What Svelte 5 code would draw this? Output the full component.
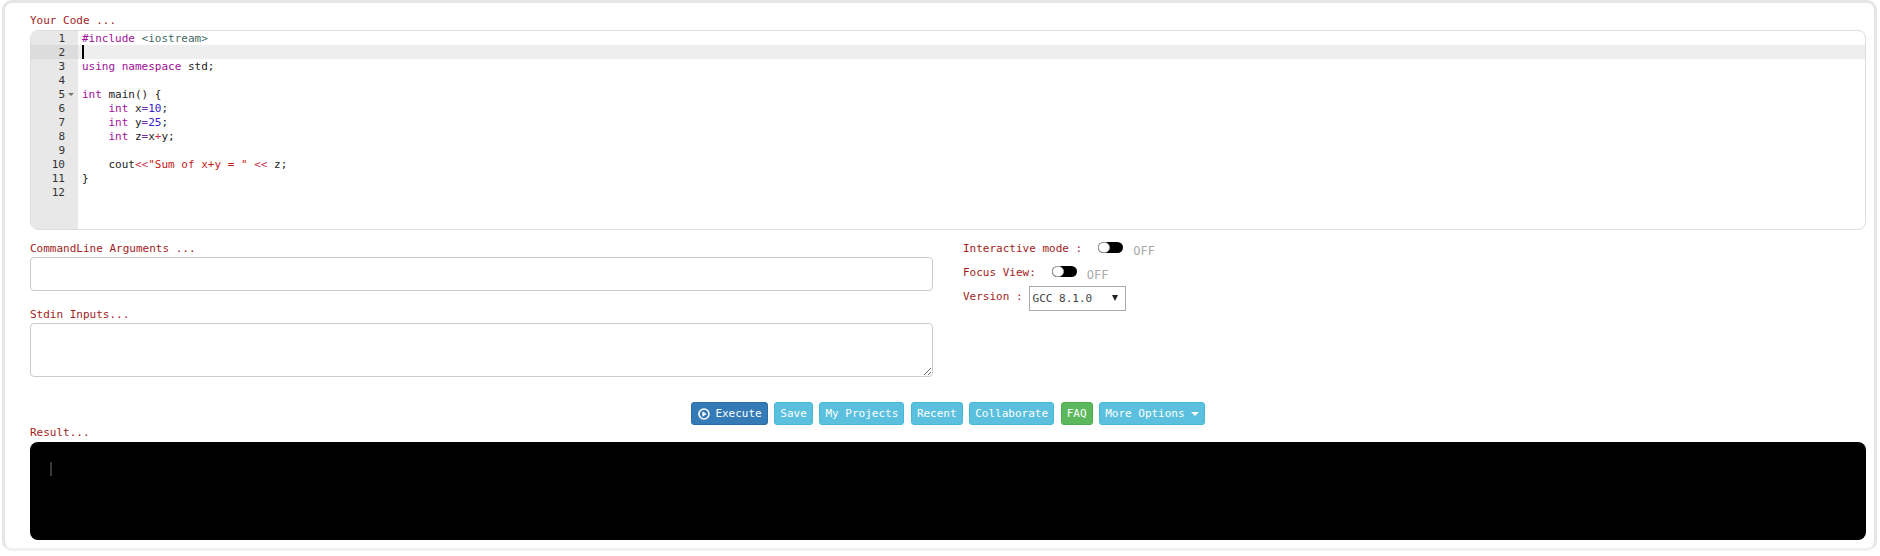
<script>
  const buttons = [
    { label: 'Save', kind: 'info' },
    { label: 'My Projects', kind: 'info' },
    { label: 'Recent', kind: 'info' },
    { label: 'Collaborate', kind: 'info' },
    { label: 'FAQ', kind: 'success' }
  ]

  const lineNumbers = Array.from({ length: 12 }, (_, i) => i + 1)
</script>

<div class="card">
  <div class="label">Your Code ...</div>
  <div class="editor">
    <div class="gutter">
      {#each lineNumbers as n}
        <div class="num" class:active={n === 2}>
          {n}{#if n === 5}<span class="fold"></span>{/if}
        </div>
      {/each}
    </div>
    <div class="lines">
      <div class="line"><span class="kw">#include</span> <span class="inc">&lt;iostream&gt;</span></div>
      <div class="line active"><span class="cursor"></span></div>
      <div class="line"><span class="kw">using</span> <span class="kw">namespace</span> std;</div>
      <div class="line"></div>
      <div class="line"><span class="kw">int</span> main() {'{'}</div>
      <div class="line indent"><span class="kw">int</span> x<span class="eq">=</span><span class="nb">10</span>;</div>
      <div class="line indent"><span class="kw">int</span> y<span class="eq">=</span><span class="nb">25</span>;</div>
      <div class="line indent"><span class="kw">int</span> z<span class="eq">=</span>x<span class="op">+</span>y;</div>
      <div class="line"></div>
      <div class="line indent">cout<span class="op">&lt;&lt;</span><span class="str">"Sum of x+y = "</span> <span class="op">&lt;&lt;</span> z;</div>
      <div class="line">{'}'}</div>
      <div class="line"></div>
    </div>
  </div>

  <div class="form-row">
    <div class="inputs">
      <div class="label">CommandLine Arguments ...</div>
      <input class="field" type="text" />
      <div class="label stdin-label">Stdin Inputs...</div>
      <textarea class="field area"></textarea>
    </div>
    <div class="options">
      <div class="opt">
        <span class="label">Interactive mode :</span>
        <span class="toggle"></span>
        <span class="off">OFF</span>
      </div>
      <div class="opt">
        <span class="label">Focus View:</span>
        <span class="toggle"></span>
        <span class="off">OFF</span>
      </div>
      <div class="opt version">
        <span class="label">Version :</span>
        <span class="select">GCC 8.1.0<span class="arrow"></span></span>
      </div>
    </div>
  </div>

  <div class="actions">
    <button class="btn primary">
      <svg viewBox="0 0 12 12" width="12" height="12" aria-hidden="true">
        <circle cx="6" cy="6" r="5" fill="none" stroke="currentColor" stroke-width="1.6" />
        <path d="M4.4 3.3 8.6 6 4.4 8.7z" fill="currentColor" />
      </svg>
      Execute
    </button>
    {#each buttons as b}
      <button class="btn {b.kind}">{b.label}</button>
    {/each}
    <button class="btn info">More Options <span class="caret"></span></button>
  </div>

  <div class="label result-label">Result...</div>
  <div class="terminal"><span class="term-cursor"></span></div>
</div>

<style>
  :global(body) {
    background: #fff;
  }

  .card {
    box-sizing: border-box;
    width: 1875px;
    height: 551px;
    margin-left: 2px;
    padding: 11px 8px 0 25px;
    border: 3px solid #e6e6e6;
    border-bottom-color: #f1f1f1;
    border-radius: 10px;
    font-family: 'DejaVu Sans Mono', monospace;
    font-size: 11px;
    color: #222;
  }

  .label {
    color: #a11d1d;
    line-height: 14px;
  }

  .editor {
    display: flex;
    box-sizing: border-box;
    height: 200px;
    margin-top: 2px;
    border: 1px solid #ddd;
    border-radius: 8px;
    overflow: hidden;
    line-height: 16px;
  }

  .gutter {
    width: 47px;
    background: #e8e8e8;
    color: #333;
    flex: none;
  }

  .num {
    position: relative;
    box-sizing: border-box;
    height: 14px;
    padding-right: 13px;
    text-align: right;
  }

  .num.active {
    background: #dcdcdc;
  }

  .fold {
    position: absolute;
    right: 4px;
    top: 6px;
    border: 3px solid transparent;
    border-top: 3px solid #777;
    border-bottom: 0;
  }

  .lines {
    flex: 1;
  }

  .line {
    height: 14px;
    padding-left: 4px;
    white-space: pre;
  }

  .line.indent {
    padding-left: calc(4px + 4ch);
  }

  .line.active {
    background: #eeeeee;
  }

  .cursor {
    display: block;
    width: 2px;
    height: 14px;
    background: #000;
  }

  .kw {
    color: #a0109a;
  }

  .inc {
    color: #3f6b66;
  }

  .eq {
    color: #7a2fa8;
  }

  .nb {
    color: #3322cc;
  }

  .op {
    color: #c4324c;
  }

  .str {
    color: #c41a16;
  }

  .form-row {
    display: flex;
    margin-top: 12px;
  }

  .inputs {
    width: 903px;
    flex: none;
  }

  .field {
    display: block;
    box-sizing: border-box;
    width: 100%;
    height: 34px;
    margin: 1px 0 0;
    padding: 4px 8px;
    border: 1px solid #ccc;
    border-radius: 4px;
    background: #fff;
  }

  .area {
    height: 54px;
    resize: vertical;
  }

  .stdin-label {
    margin-top: 17px;
  }

  .options {
    margin-left: 30px;
  }

  .opt {
    display: flex;
    align-items: center;
    height: 14px;
    margin-bottom: 10px;
  }

  .toggle {
    position: relative;
    display: inline-block;
    width: 25px;
    height: 11px;
    margin: -4px 0 0 16px;
    border-radius: 6px;
    background: #000;
  }

  .toggle::before {
    content: '';
    position: absolute;
    left: 0;
    top: 0;
    width: 12px;
    height: 11px;
    box-sizing: border-box;
    border: 1px solid #aaa;
    border-radius: 6px;
    background: #fff;
  }

  .off {
    margin: 3px 0 0 10px;
    color: #aaa;
    font-size: 12px;
  }

  .version {
    height: 25px;
    margin-top: -4px;
  }

  .version .label {
    margin-top: -3px;
  }

  .select {
    position: relative;
    box-sizing: border-box;
    display: block;
    width: 97px;
    height: 25px;
    margin-left: 6px;
    padding: 5px 3px;
    border: 1px solid #aaa;
    color: #444;
    line-height: 14px;
  }

  .arrow {
    position: absolute;
    right: 7px;
    top: 8px;
    border: 3px solid transparent;
    border-top: 6px solid #222;
    border-bottom: 0;
  }

  .actions {
    display: flex;
    justify-content: center;
    gap: 6.6px;
    margin-top: 25px;
  }

  .btn {
    display: inline-flex;
    align-items: center;
    gap: 5px;
    box-sizing: border-box;
    height: 23px;
    padding: 0 5px;
    border: 1px solid transparent;
    border-radius: 3px;
    color: #fff;
    font: inherit;
  }

  .primary {
    padding-left: 6px;
    background: #337ab7;
    border-color: #2e6da4;
  }

  .info {
    background: #5bc0de;
    border-color: #46b8da;
  }

  .success {
    background: #5cb85c;
    border-color: #4cae4c;
  }

  .caret {
    width: 0;
    height: 0;
    margin: 1px 0 0 1px;
    border: 4px solid transparent;
    border-top-color: #fff;
    border-bottom: 0;
  }

  .result-label {
    margin-top: 1px;
  }

  .terminal {
    box-sizing: border-box;
    height: 98px;
    margin-top: 2px;
    padding: 20px;
    border-radius: 8px;
    background: #000;
  }

  .term-cursor {
    display: block;
    width: 2px;
    height: 14px;
    background: #3a3a3a;
  }
</style>
